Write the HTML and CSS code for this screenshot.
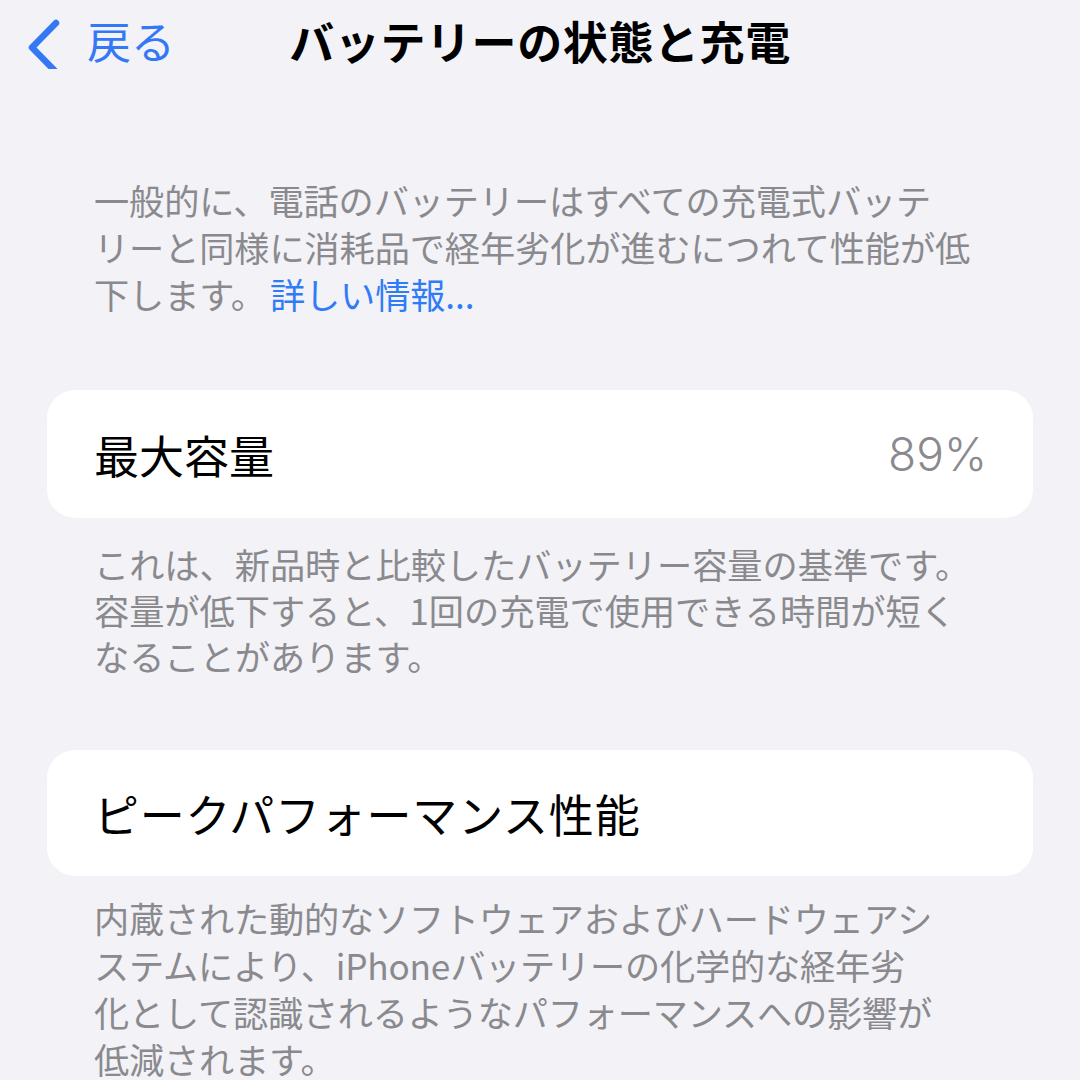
FILE: index.html
```html
<!DOCTYPE html>
<html lang="ja">
<head>
<meta charset="utf-8">
<link rel="stylesheet" href="styles.css">
</head>
<body>
<header class="nav">
  <div class="back">
    <svg class="chev" width="40" height="60" viewBox="0 0 40 60"><path d="M32 14 L8 38.5 L32 63" fill="none" stroke="#3478f6" stroke-width="6.5" stroke-linecap="round" stroke-linejoin="round"/></svg>
    <span class="back-text">戻る</span>
  </div>
  <h1 class="title">バッテリーの状態と充電</h1>
  <div></div>
</header>
<main class="content">
  <p class="note first">一般的に、電話のバッテリーはすべての充電式バッテ<br>リーと同様に消耗品で経年劣化が進むにつれて性能が低<br>下します。<span class="link">詳しい情報...</span></p>
  <div class="card">
    <span class="label">最大容量</span>
    <span class="value">89%</span>
  </div>
  <p class="note n2">これは、新品時と比較したバッテリー容量の基準です。<br>容量が低下すると、1回の充電で使用できる時間が短く<br>なることがあります。</p>
  <div class="card c2">
    <span class="label wide">ピークパフォーマンス性能</span>
  </div>
  <p class="note n3">内蔵された動的なソフトウェアおよびハードウェアシ<br>ステムにより、iPhoneバッテリーの化学的な経年劣<br>化として認識されるようなパフォーマンスへの影響が<br>低減されます。</p>
</main>
</body>
</html>
```
FILE: styles.css
```css
html, body {
  margin: 0;
  padding: 0;
  background: #f2f2f7;
  font-family: "Noto Sans CJK JP", "Noto Sans", sans-serif;
  overflow: hidden;
}
.nav {
  display: grid;
  grid-template-columns: 1fr auto 1fr;
  align-items: center;
  height: 80px;
}
.back {
  display: flex;
  align-items: center;
  padding-left: 24px;
  height: 80px;
}
.chev {
  display: block;
  margin-top: -2px;
}
.back-text {
  color: #3478f6;
  font-size: 44px;
  margin-left: 23px;
  line-height: 1;
}
.title {
  margin: 0;
  font-size: 45px;
  font-weight: 700;
  color: #000;
  line-height: 1;
  letter-spacing: 0.6px;
}
.content {
  padding: 0 47px;
}
.note {
  margin: 0;
  padding-left: 47px;
  color: #8a8a8e;
  font-size: 35.2px;
  line-height: 47px;
  white-space: nowrap;
}
.note.first {
  margin-top: 96px;
  margin-bottom: 73px;
  letter-spacing: -0.1px;
}
.link {
  color: #2f7cf6;
  margin-left: 4px;
}
.card {
  background: #fff;
  border-radius: 28px;
  height: 128px;
  display: flex;
  align-items: center;
  justify-content: space-between;
  padding: 0 46px 0 47px;
}
.label {
  font-size: 45px;
  color: #000;
  line-height: 1;
}
.label.wide {
  letter-spacing: 0.8px;
}
.value {
  font-size: 46px;
  font-weight: 300;
  color: #8a8a8e;
  line-height: 1;
  font-family: "Inter", "Noto Sans", sans-serif;
}
.note.n2 {
  margin-top: 23px;
  margin-bottom: 71px;
  line-height: 46px;
}
.card.c2 {
  height: 126px;
}
.note.n3 {
  margin-top: 18px;
  letter-spacing: -0.2px;
}
```
